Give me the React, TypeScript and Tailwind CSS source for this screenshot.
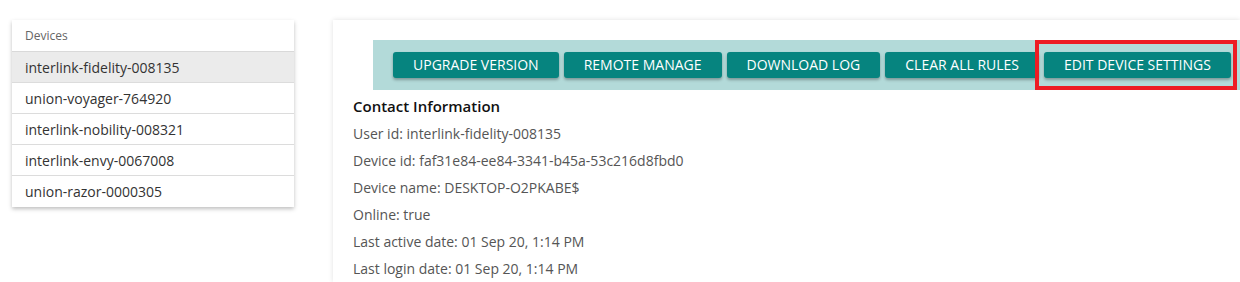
import React from "react";

const devices = [
  "interlink-fidelity-008135",
  "union-voyager-764920",
  "interlink-nobility-008321",
  "interlink-envy-0067008",
  "union-razor-0000305",
];

const buttons = ["UPGRADE VERSION", "REMOTE MANAGE", "DOWNLOAD LOG", "CLEAR ALL RULES"];

const info = [
  "User id: interlink-fidelity-008135",
  "Device id: faf31e84-ee84-3341-b45a-53c216d8fbd0",
  "Device name: DESKTOP-O2PKABE$",
  "Online: true",
  "Last active date: 01 Sep 20, 1:14 PM",
  "Last login date: 01 Sep 20, 1:14 PM",
];

function Btn({ label }: { label: string }) {
  return (
    <button className="h-[26px] px-[20px] bg-[#06847f] text-white text-[14px] leading-[26px] rounded-[3px] shadow-[0_2px_3px_rgba(0,0,0,0.3)] whitespace-nowrap">
      {label}
    </button>
  );
}

export default function App() {
  return (
    <div
      className="w-[1240px] h-[282px] overflow-hidden bg-white flex pt-[20px] pl-[12px]"
      style={{ fontFamily: '"Open Sans", "Noto Sans", sans-serif' }}
    >
      <div className="w-[282px] self-start bg-white shadow-[0_2px_4px_rgba(0,0,0,0.25)]">
        <div className="h-[32px] border-b border-[#d9d9d9] pl-[13px] flex items-center text-[12px] text-[#666]">
          Devices
        </div>
        {devices.map((d, i) => (
          <div
            key={d}
            className={`h-[31px] flex items-center pl-[13px] text-[14px] text-[#333] ${
              i < devices.length - 1 ? "border-b border-[#dcdcdc]" : ""
            } ${i === 0 ? "bg-[#ebebeb]" : ""}`}
          >
            {d}
          </div>
        ))}
      </div>

      <div className="ml-[39px] flex-1 bg-white shadow-[0_0_5px_rgba(0,0,0,0.12)] pt-[20px] pl-[20px]">
        <div className="ml-[20px] h-[50px] bg-[#b3dad9] flex items-center pl-[20px] gap-[5px] relative">
          {buttons.map((b) => (
            <Btn key={b} label={b} />
          ))}
          <Btn label="EDIT DEVICE SETTINGS" />
          <div className="absolute top-0 left-[662px] w-[202px] h-[50px] border-[4px] border-[#ed1c24] pointer-events-none" />
        </div>
        <div className="pt-[6px] text-[15px] font-semibold text-[#111] leading-[20px]">
          Contact Information
        </div>
        <div className="pt-[4px]">
          {info.map((l) => (
            <div key={l} className="h-[27px] leading-[27px] text-[14px] text-[#555]">
              {l}
            </div>
          ))}
        </div>
      </div>
    </div>
  );
}
